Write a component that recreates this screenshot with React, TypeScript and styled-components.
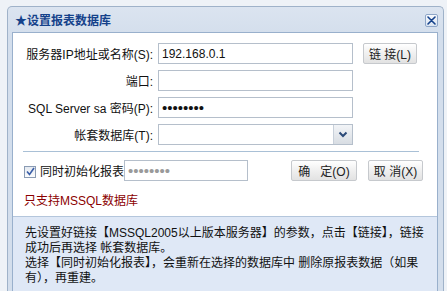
import React from 'react';
import styled, { createGlobalStyle } from 'styled-components';

const GlobalStyle = createGlobalStyle`
  html, body {
    margin: 0;
    padding: 0;
    background: #eef2f7;
    font-family: "Liberation Sans", "Noto Sans CJK SC", sans-serif;
    font-size: 12px;
    color: #111;
  }
`;

const App = () => {
  return (
    <>
      <GlobalStyle />
      <Window>
        <TitleBar>
          <Title>★设置报表数据库</Title>
          <CloseButton aria-label="close">
            <svg width="9" height="9" viewBox="0 0 9 9">
              <path d="M1 1 L8 8 M8 1 L1 8" stroke="#15428b" strokeWidth="1.6" strokeLinecap="round" />
            </svg>
          </CloseButton>
        </TitleBar>
        <Content>
          <FormPanel>
            <FormGrid>
              <Label>服务器IP地址或名称(S):</Label>
              <TextInput defaultValue="192.168.0.1" />
              <Button $width={54}>链 接(L)</Button>

              <Label>端口:</Label>
              <TextInput defaultValue="" />
              <span />

              <Label>SQL Server sa 密码(P):</Label>
              <TextInput type="password" defaultValue="12345678" $dots />
              <span />

              <Label>帐套数据库(T):</Label>
              <SelectBox>
                <SelectText />
                <SelectArrow>
                  <svg width="10" height="7" viewBox="0 0 10 7">
                    <path d="M1.5 1.5 L5 5 L8.5 1.5" stroke="#2b4a78" strokeWidth="2" fill="none" />
                  </svg>
                </SelectArrow>
              </SelectBox>
              <span />
            </FormGrid>

            <Separator />

            <ActionRow>
              <CheckBox>
                <svg width="9" height="9" viewBox="0 0 9 9">
                  <path d="M1 4.5 L3.5 7.5 L8 1" stroke="#3a5ea8" strokeWidth="1.6" fill="none" />
                </svg>
              </CheckBox>
              <CheckLabel>同时初始化报表</CheckLabel>
              <TextInput type="password" defaultValue="12345678" $dots $muted $width={124} />
              <Spacer />
              <Button $width={66}>确&nbsp;&nbsp;&nbsp;定(O)</Button>
              <Button $width={55}>取 消(X)</Button>
            </ActionRow>

            <Warning>只支持MSSQL数据库</Warning>
          </FormPanel>

          <InfoPanel>
            先设置好链接【MSSQL2005以上版本服务器】的参数，点击【链接】，链接<br />
            成功后再选择 帐套数据库。<br />
            选择【同时初始化报表】，会重新在选择的数据库中 删除原报表数据（如果<br />
            有），再重建。
          </InfoPanel>
        </Content>
      </Window>
    </>
  );
};

// Styled Components
const Window = styled.div`
  margin: 6px 3px 0 7px;
  height: 285px;
  box-sizing: border-box;
  border: 1px solid #9fb2c9;
  border-bottom: none;
  border-radius: 5px 5px 0 0;
  background: linear-gradient(#dbe4f0, #d3deec 30px, #d3deec);
  padding: 0 5px 0 4px;
  display: flex;
  flex-direction: column;
`;

const TitleBar = styled.div`
  height: 25px;
  display: flex;
  align-items: center;
  justify-content: space-between;
  padding: 0 0 0 3px;
`;

const Title = styled.div`
  font-weight: bold;
  font-size: 12px;
  color: #15428b;
`;

const CloseButton = styled.div`
  width: 11px;
  height: 11px;
  border: 1px solid #8ea6c8;
  border-radius: 2px;
  background: linear-gradient(#f6f9fd, #dbe5f2);
  display: flex;
  align-items: center;
  justify-content: center;
  margin-top: 1px;
`;

const Content = styled.div`
  flex: 1;
  border: 1px solid #99b0cc;
  border-bottom: none;
  display: flex;
  flex-direction: column;
`;

const FormPanel = styled.div`
  background: #fff;
  padding: 10px 14px 0 0;
  height: 184px;
  box-sizing: border-box;
  border-bottom: 1px solid #b4c6dc;
`;

const FormGrid = styled.div`
  display: grid;
  grid-template-columns: 135px 195px 54px;
  column-gap: 10px;
  row-gap: 6px;
  align-items: center;
`;

const Label = styled.div`
  text-align: right;
  margin-right: -5px;
  white-space: nowrap;
  font-size: 12px;
  color: #111;
`;

const TextInput = styled.input<{ $dots?: boolean; $muted?: boolean; $width?: number }>`
  box-sizing: border-box;
  width: ${(p) => (p.$width ? `${p.$width}px` : '100%')};
  height: 21px;
  border: 1px solid #b5bfcb;
  background: #fff;
  font-family: inherit;
  font-size: ${(p) => (p.$dots ? '15px' : '12px')};
  color: ${(p) => (p.$muted ? '#9a9a9a' : '#111')};
  padding: 0 3px;
  outline: none;
  margin: 0;
`;

const SelectBox = styled.div`
  box-sizing: border-box;
  height: 21px;
  border: 1px solid #b5bfcb;
  display: flex;
  background: #fff;
`;

const SelectText = styled.div`
  flex: 1;
`;

const SelectArrow = styled.div`
  width: 18px;
  border-left: 1px solid #c8d0da;
  background: linear-gradient(#f2f4f7, #d8dde3);
  display: flex;
  align-items: center;
  justify-content: center;
`;

const Button = styled.div<{ $width: number }>`
  box-sizing: border-box;
  width: ${(p) => p.$width}px;
  height: 21px;
  border: 1px solid #c6c9cd;
  border-radius: 2px;
  background: linear-gradient(#ffffff, #f1f1f1 45%, #e2e2e2);
  display: flex;
  align-items: center;
  justify-content: center;
  font-size: 12px;
  color: #222;
  white-space: nowrap;
`;

const Separator = styled.div`
  height: 1px;
  background: #a9c0d6;
  margin: 6px 4px 8px 10px;
`;

const ActionRow = styled.div`
  display: flex;
  align-items: center;
  padding-left: 11px;
  & > ${Button} + ${Button} {
    margin-left: 11px;
  }
`;

const CheckBox = styled.div`
  box-sizing: border-box;
  width: 12px;
  height: 12px;
  border: 1px solid #8a9bb3;
  background: linear-gradient(#e4e9f0, #fbfcfd);
  display: flex;
  align-items: center;
  justify-content: center;
  margin-right: 4px;
  margin-top: 2px;
`;

const CheckLabel = styled.div`
  width: 84px;
  white-space: nowrap;
  font-size: 12px;
`;

const Spacer = styled.div`
  flex: 1;
`;

const Warning = styled.div`
  color: #8b0000;
  font-size: 12px;
  padding: 10px 0 0 11px;
`;

const InfoPanel = styled.div`
  flex: 1;
  background: #dfe8f6;
  padding: 9px 0 0 12px;
  line-height: 15px;
  font-size: 12px;
  color: #111;
  white-space: nowrap;
`;

export default App;
